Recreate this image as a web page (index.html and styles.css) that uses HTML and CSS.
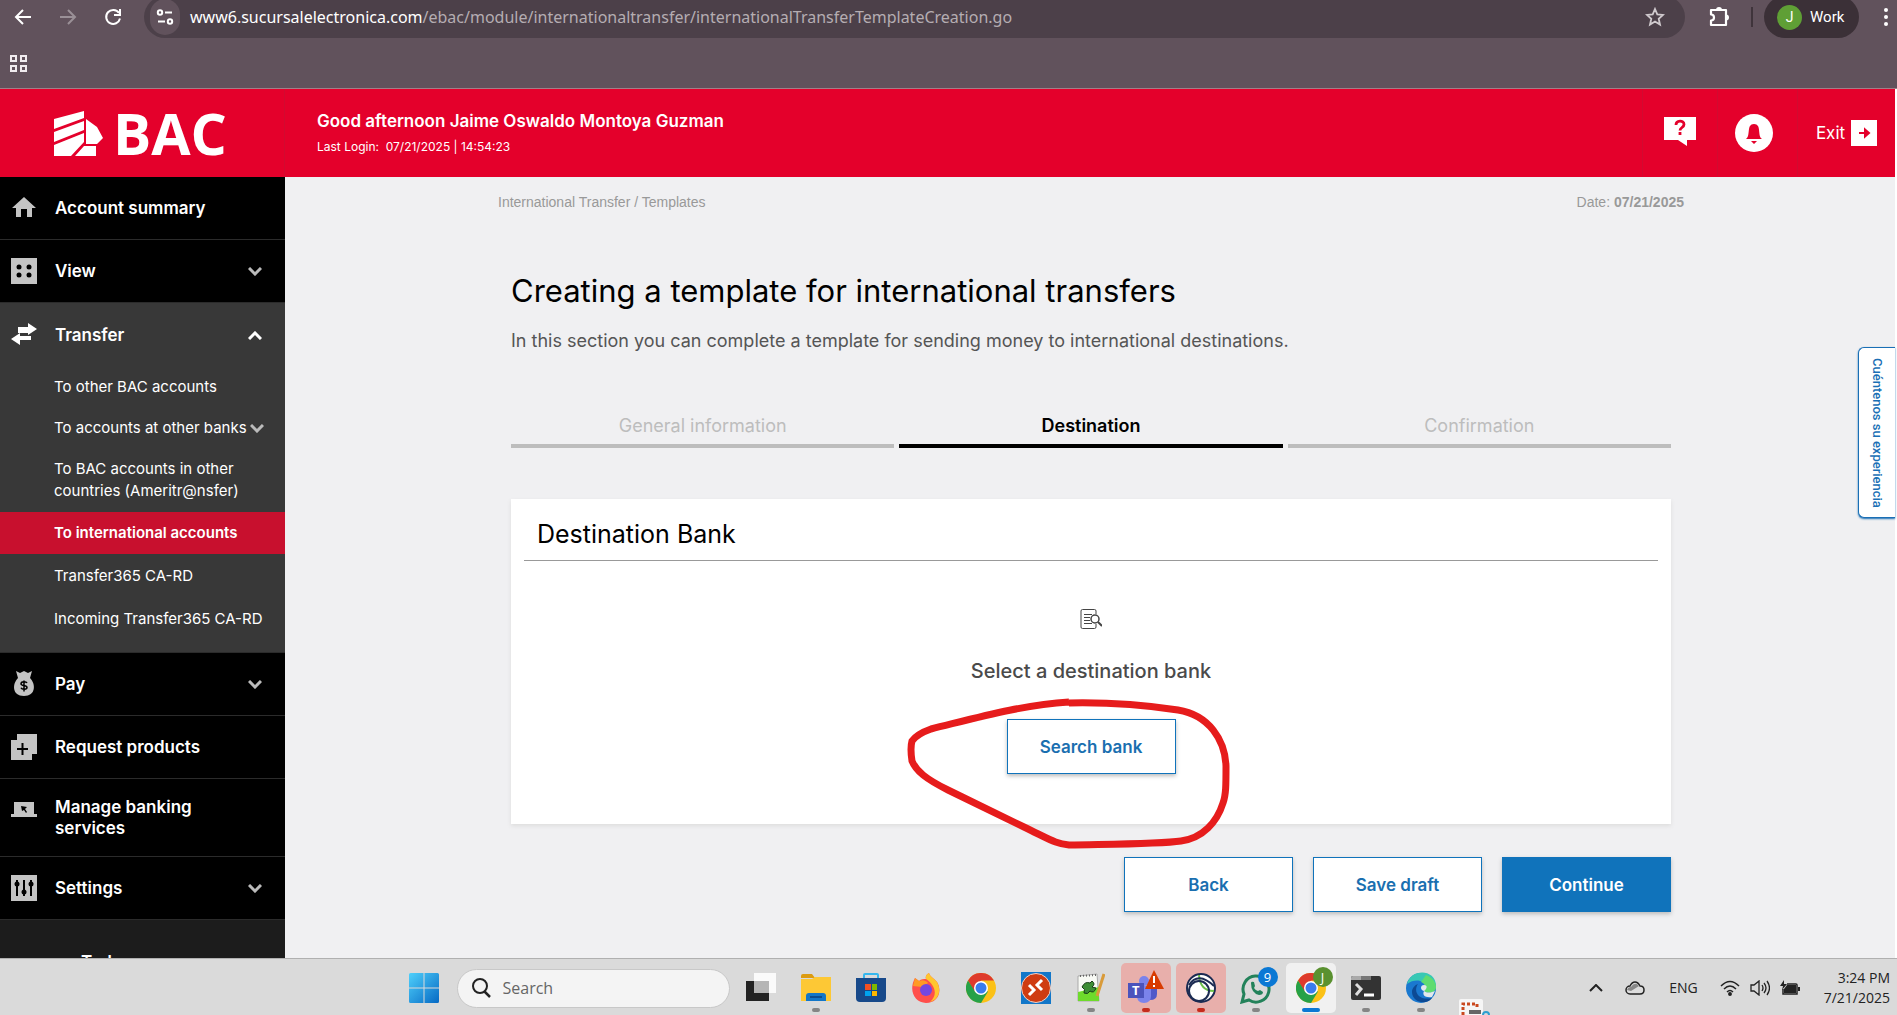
FILE: index.html
```html
<!DOCTYPE html>
<html lang="en">
<head>
    <meta charset="UTF-8">
    <meta name="viewport" content="width=device-width, initial-scale=1.0">
    <title>International Transfer - Templates</title>
    <link rel="stylesheet" href="styles.css">
</head>
<body>
    <!-- Browser bar -->
    <div class="browser">
        <div class="toolbar">
            <button class="tool" type="button" aria-label="Back">
                <svg width="18" height="18" viewBox="0 0 18 18" fill="none" stroke="#fff" stroke-width="2"><path d="M17 9H2M9 2L2 9l7 7"/></svg>
            </button>
            <button class="tool" type="button" aria-label="Forward">
                <svg width="18" height="18" viewBox="0 0 18 18" fill="none" stroke="#9a9097" stroke-width="2"><path d="M1 9h15M9 2l7 7-7 7"/></svg>
            </button>
            <button class="tool" type="button" aria-label="Reload">
                <svg width="18" height="18" viewBox="0 0 18 18" fill="none" stroke="#fff" stroke-width="2"><path d="M15 5A7 7 0 1 0 16 10.500M16 1v6h-6"/></svg>
            </button>
            <div class="address">
                <span class="site-info">
                    <svg width="18" height="18" viewBox="0 0 18 18" fill="none" stroke="#fff" stroke-width="2"><circle cx="4" cy="4.500" r="2.200"/><path d="M9 4.500h7M2 13.500h7"/><circle cx="14" cy="13.500" r="2.200"/></svg>
                </span>
                <span class="url">www6.sucursalelectronica.com<span class="url-path">/ebac/module/internationaltransfer/internationalTransferTemplateCreation.go</span></span>
                <svg class="star" width="20" height="20" viewBox="0 0 20 20" fill="none" stroke="#d0cace" stroke-width="1.800"><path d="M10 2l2.300 5.400 5.700.5-4.300 3.900 1.300 5.800-5-3.100-5 3.100 1.300-5.800L2 7.900l5.700-.5z"/></svg>
            </div>
            <button class="tool extensions" type="button" aria-label="Extensions">
                <svg width="22" height="22" viewBox="0 0 22 22"><path d="M2 4h15v15H2v-4.500c4 0 4-6 0-6z" fill="none" stroke="#fff" stroke-width="2.200" stroke-linejoin="round"/><path d="M7 4a3 3 0 0 1 6 0zM17 8.500a3 3 0 0 1 0 6z" fill="#fff"/></svg>
            </button>
            <span class="separator"></span>
            <button class="profile" type="button"><span class="avatar">J</span>Work</button>
            <button class="tool more" type="button" aria-label="Menu">
                <svg width="6" height="18" viewBox="0 0 6 18" fill="#fff"><circle cx="3" cy="2" r="2"/><circle cx="3" cy="9" r="2"/><circle cx="3" cy="16" r="2"/></svg>
            </button>
        </div>
        <div class="bookmarks">
            <svg width="20" height="20" viewBox="0 0 20 20" fill="none" stroke="#f1ecef" stroke-width="2"><path d="M2 2h5v5H2zM12 2h5v5h-5zM2 12h5v5H2zM12 12h5v5h-5z"/></svg>
        </div>
    </div>

    <div class="page">
        <!-- Header -->
        <header class="header">
            <a class="logo" href="#">
                <svg width="50" height="45" viewBox="0 0 50 45" fill="#fff"><path d="M0 8L30 0v7L0 18zM0 21L30 10v9L0 31zM0 34L30 22v9L17 45H0zM32 8l11 8 6 11-6 6H32zM21 45l9-10h12v10z"/></svg>
                <span>BAC</span>
            </a>
            <div class="greeting">
                <strong>Good afternoon Jaime Oswaldo Montoya Guzman</strong>
                <span>Last Login: &nbsp;07/21/2025 | 14:54:23</span>
            </div>
            <nav class="header-links">
                <a class="help" href="#" aria-label="Help">
                    <svg width="32" height="29" viewBox="0 0 32 29"><path d="M0 0h32v23h-9v6l-9-6H0z" fill="#fff"/><path d="M12 8c0-5 8-5 8-.5 0 3-4 3-4 6M16 15v3" fill="none" stroke="#e4002b" stroke-width="2.800"/></svg>
                </a>
                <a class="bell" href="#" aria-label="Notifications">
                    <svg width="38" height="38" viewBox="0 0 38 38"><circle cx="19" cy="19" r="19" fill="#fff"/><path d="M11 25c5-3 0-15 8-15s3 12 8 15zM16 27h6l-3 3z" fill="#e4002b"/></svg>
                </a>
                <a class="exit" href="#">Exit
                    <svg width="26" height="26" viewBox="0 0 26 26"><path d="M0 0h26v26H0z" fill="#fff"/><path d="M8 13h7M14 9.500l4 3.500-4 3.500z" fill="#e4002b" stroke="#e4002b" stroke-width="2"/></svg>
                </a>
            </nav>
        </header>

        <div class="body">
            <!-- Side menu -->
            <nav class="sidebar">
                <ul class="menu">
                    <li><a class="menu-item" href="#">
                        <svg class="icon" viewBox="0 0 26 26"><path d="M13 2l12 11h-4v9h-5v-8h-6v8H5v-9H1z" fill="#c4c4c4"/></svg>
                        Account summary</a></li>
                    <li><a class="menu-item" href="#">
                        <svg class="icon" viewBox="0 0 26 26"><path d="M0 0h26v26H0z" fill="#c4c4c4"/><circle cx="8" cy="9" r="2.500"/><circle cx="18" cy="9" r="2.500"/><circle cx="8" cy="17" r="2.500"/><circle cx="18" cy="17" r="2.500"/></svg>
                        View
                        <svg class="arrow" viewBox="0 0 14 9"><path d="M1 1l6 6 6-6"/></svg></a></li>
                    <li class="open">
                        <a class="menu-item" href="#">
                            <svg class="icon" viewBox="0 0 26 26" fill="#fff"><path d="M17 1l9 6-9 6v-2H7V5h10zM9 11v3h11v4H9v5l-9-6z"/></svg>
                            Transfer
                            <svg class="arrow" viewBox="0 0 14 9"><path d="M1 8l6-6 6 6"/></svg></a>
                        <ul class="submenu">
                            <li><a href="#">To other BAC accounts</a></li>
                            <li><a href="#">To accounts at other banks <svg class="arrow" viewBox="0 0 14 9"><path d="M1 1l6 6 6-6"/></svg></a></li>
                            <li><a href="#">To BAC accounts in other countries (Ameritr@nsfer)</a></li>
                            <li class="active"><a href="#">To international accounts</a></li>
                            <li><a href="#">Transfer365 CA-RD</a></li>
                            <li><a href="#">Incoming Transfer365 CA-RD</a></li>
                        </ul>
                    </li>
                    <li><a class="menu-item" href="#">
                        <svg class="icon" viewBox="0 0 26 26"><path d="M5 0l4 2 4-2 4 2 4-2-2 7c6 6 6 18-6 18S1 13 7 7z" fill="#c4c4c4"/><path d="M16 12c-1-2-6-1.500-6 .7 0 2.600 6 1.200 6 3.800 0 2.300-5 2.500-6 .3M13 9.500v11" fill="none" stroke="#000" stroke-width="1.500"/></svg>
                        Pay
                        <svg class="arrow" viewBox="0 0 14 9"><path d="M1 1l6 6 6-6"/></svg></a></li>
                    <li><a class="menu-item" href="#">
                        <svg class="icon" viewBox="0 0 26 26"><path d="M6 0h20v20h-5v6H0V6h6z" fill="#c4c4c4"/><path d="M6 15h11M11.500 9v12" stroke="#000" stroke-width="2"/></svg>
                        Request products</a></li>
                    <li><a class="menu-item two-lines" href="#">
                        <svg class="icon" viewBox="0 0 26 26"><path d="M3 5h20v12h3v3H0v-3h3z" fill="#c4c4c4"/><path d="M10 9l6 1-2 2 2 3-1 1-2-3-2 1z"/></svg>
                        Manage banking services</a></li>
                    <li><a class="menu-item" href="#">
                        <svg class="icon" viewBox="0 0 26 26"><path d="M0 0h26v26H0z" fill="#c4c4c4"/><path d="M6 5v16M13 5v16M20 5v16" stroke="#000" stroke-width="2"/><circle cx="6" cy="9" r="2.500"/><circle cx="13" cy="17" r="2.500"/><circle cx="20" cy="9" r="2.500"/></svg>
                        Settings
                        <svg class="arrow" viewBox="0 0 14 9"><path d="M1 1l6 6 6-6"/></svg></a></li>
                </ul>
                <div class="sidebar-foot">Today</div>
            </nav>

            <!-- Content -->
            <main class="main">
                <div class="container">
                    <div class="crumbs">
                        <span>International Transfer / Templates</span>
                        <span>Date: <b>07/21/2025</b></span>
                    </div>
                    <div class="content">
                        <h1>Creating a template for international transfers</h1>
                        <p class="intro">In this section you can complete a template for sending money to international destinations.</p>
                        <ol class="steps">
                            <li>General information</li>
                            <li class="current">Destination</li>
                            <li>Confirmation</li>
                        </ol>
                        <section class="card">
                            <h2>Destination Bank</h2>
                            <svg width="22" height="20" viewBox="0 0 22 20" fill="none" stroke="#444"><path d="M16 5V2q0-1.500-1.500-1.500h-12Q1 .5 1 2v16q0 1.500 1.500 1.500h12q1.500 0 1.500-1.500v-3M4 5.500h8M4 8.500h6M4 11.500h6M4 14.500h8"/><circle cx="15" cy="10" r="4" stroke-width="1.500"/><path d="M18 13l4 4" stroke-width="2"/></svg>
                            <p>Select a destination bank</p>
                            <button class="btn" type="button">Search bank</button>
                            <svg class="marker" width="340" height="170" viewBox="900 690 340 170"><path d="M1068 703C1113 702 1150 706 1177 710C1208 715 1224 740 1225 766C1225 785 1225 795 1222 803C1216 822 1202 838 1180 841C1160 844 1120 844 1068 845C1055 844 1050 840 1023 827L947 790C925 779 915 771 911 761Q909 748 911 741Q916 734 930 729C975 718 1020 705 1068 702"/></svg>
                        </section>
                        <div class="actions">
                            <button class="btn" type="button">Back</button>
                            <button class="btn" type="button">Save draft</button>
                            <button class="btn primary" type="submit">Continue</button>
                        </div>
                    </div>
                </div>
            </main>
        </div>
        <button class="feedback" type="button">Cuéntenos su experiencia</button>
    </div>

    <!-- Taskbar -->
    <footer class="taskbar">
        <div class="apps">
            <button class="app" type="button" aria-label="Start">
                <svg width="30" height="30" viewBox="0 0 30 30"><defs><linearGradient id="win" x2="1" y2="1"><stop stop-color="#4fd0fb"/><stop offset="1" stop-color="#0669c4"/></linearGradient></defs><path d="M0 1.500Q0 0 1.500 0H14.500V14.500H0zM15.500 0H28.500Q30 0 30 1.500V14.500H15.500zM0 15.500H14.500V30H1.500Q0 30 0 28.500zM15.500 15.500H30V28.500Q30 30 28.500 30H15.500z" fill="url(#win)"/></svg>
            </button>
            <label class="search">
                <svg width="20" height="20" viewBox="0 0 20 20" fill="none" stroke="#222" stroke-width="2"><circle cx="9" cy="8" r="7"/><path d="M13 13l6 6" stroke-width="2.500"/></svg>
                <input type="text" placeholder="Search" aria-label="Search">
            </label>
            <button class="app" type="button" aria-label="Task view">
                <svg width="30" height="30" viewBox="0 0 30 30"><path d="M0 8h23v20H0z" fill="#222"/><path d="M8 0h22v20H8z" fill="#fff" opacity=".85"/><path d="M8 8h15v12H8z" fill="#b5b5b5"/></svg>
            </button>
            <button class="app running" type="button" aria-label="File Explorer">
                <svg width="30" height="30" viewBox="0 0 30 30"><path d="M0 3q0-2 2-2h9l3 4H0z" fill="#dc9b10"/><path d="M0 6h11l3-2h16v24H0z" fill="#fdc835"/><path d="M5 28v-5q0-3 3-3h14q3 0 3 3v5z" fill="#1276c8"/><path d="M9 24h12" stroke="#0a4d91" stroke-width="2"/></svg>
            </button>
            <button class="app" type="button" aria-label="Store">
                <svg width="30" height="30" viewBox="0 0 30 30"><path d="M8 6V2q0-1 1-1h12q1 0 1 1v4" fill="none" stroke="#35b7ee" stroke-width="2"/><path d="M0 5h30v20q0 4-4 4H4q-4 0-4-4z" fill="#17498a"/><path d="M9 11h6v6H9z" fill="#f25022"/><path d="M16 11h5v6h-5z" fill="#7fba00"/><path d="M9 18h6v5H9z" fill="#00a4ef"/><path d="M16 18h5v5h-5z" fill="#ffb900"/></svg>
            </button>
            <button class="app" type="button" aria-label="Firefox">
                <svg width="30" height="30" viewBox="0 0 30 30"><path d="M4 5l4 3c2-2 5-2 7-2-1-3 1-5 3-6 1 4 5 5 8 9 6 10 0 21-11 21C4 30-3 18 4 5z" fill="#ff4f4b"/><path d="M18 0c1 4 5 5 8 9 5 9 1 18-7 20 9-8 4-18-4-23-1-3 1-5 3-6z" fill="#ffc62e"/><path d="M4 5l4 3c4-2 8 0 9 2l-6 4-9-1z" fill="#ff9a24"/><circle cx="15" cy="17" r="6" fill="#7447e0"/></svg>
            </button>
            <button class="app" type="button" aria-label="Chrome">
                <svg width="30" height="30" viewBox="0 0 30 30"><g id="chrome"><circle cx="15" cy="15" r="15" fill="#fbc116"/><path d="M2 7.500A15 15 0 0 1 28 7.500H15L8.500 19z" fill="#de3a2c"/><path d="M2 7.500A15 15 0 0 0 15 30l7-11.500-6-2-7 2z" fill="#26a148"/><circle cx="15" cy="15" r="7" fill="#fff"/><circle cx="15" cy="15" r="5.500" fill="#3a7cec"/></g></svg>
            </button>
            <button class="app" type="button" aria-label="Remote Desktop">
                <svg width="30" height="32" viewBox="0 0 30 32"><path d="M0 0h30v32H0z" fill="#1277c9"/><circle cx="15" cy="16" r="14.500" fill="#cf3c12" stroke="#f1d4ca"/><path d="M8 13l5 5-5 5M21 8l-5 5 5 5" fill="none" stroke="#fff" stroke-width="3"/></svg>
            </button>
            <button class="app running" type="button" aria-label="Notepad++">
                <svg width="28" height="30" viewBox="0 0 28 30"><path d="M1 3l19-2 2 27H1z" fill="#f8faf5" stroke="#aaa"/><path d="M1 19l21-5v14H1z" fill="#6edb2c"/><path d="M3 3l17-1" stroke="#666" stroke-width="2" stroke-dasharray="1 2"/><path d="M5 14q3-6 8-4l2-2q4 3 0 6l4 1q-2 6-6 3-2 4-6 2 2-4-2-6z" fill="#3d8d35" stroke="#173d17"/><path d="M27 1l-7 22" stroke="#d99b3a" stroke-width="3"/></svg>
            </button>
            <button class="app running alert" type="button" aria-label="Teams">
                <svg width="36" height="36" viewBox="0 0 36 36"><circle cx="16" cy="11" r="5" fill="#7b83eb"/><circle cx="25" cy="12" r="4" fill="#5059c9"/><path d="M19 16h10v8q0 6-7 6z" fill="#5059c9"/><path d="M9 16h14v10q0 7-7 7t-7-7z" fill="#7b83eb"/><path d="M0 13h16v15H0z" fill="#4b53bc"/><text class="teams-t" x="4" y="25">T</text><path d="M26 0l10 19H17z" fill="#d83b01"/><path d="M26 6v7M26 15v2" stroke="#fff" stroke-width="2"/></svg>
            </button>
            <button class="app running alert" type="button" aria-label="Monitor">
                <svg width="30" height="30" viewBox="0 0 30 30" fill="none" stroke="#1b2b52" stroke-width="2"><circle cx="15" cy="15" r="14" fill="#fff"/><path d="M13 2q1 16 15 16" stroke="#6cc04a"/><circle cx="13" cy="18" r="10"/><path d="M3 12Q12-2 28 13"/></svg>
            </button>
            <button class="app running" type="button" aria-label="WhatsApp">
                <svg width="32" height="32" viewBox="0 0 32 32" fill="none" stroke="#23825a" stroke-width="3"><path d="M2 30l2-8a13 13 0 1 1 5 6z"/><path d="M11 11q0-2 3-1l1 4-1 2q2 3 4 3l2-1 3 2q0 3-4 3-8-2-8-12z" fill="#23825a" stroke="none"/></svg>
                <span class="badge">9</span>
            </button>
            <button class="app running selected" type="button" aria-label="Chrome Work">
                <svg width="30" height="30" viewBox="0 0 30 30"><use href="#chrome"/></svg>
                <span class="badge green">J</span>
            </button>
            <button class="app running" type="button" aria-label="Terminal">
                <svg width="30" height="24" viewBox="0 0 30 24"><rect width="30" height="24" rx="2" fill="#333"/><path d="M0 4V2q0-2 2-2h8v4z" fill="#aaa"/><path d="M10 0h10v4H10z" fill="#777"/><path d="M5 8l5 5-5 6" fill="none" stroke="#ddd" stroke-width="3"/><path d="M13 19h10" stroke="#fff" stroke-width="3"/></svg>
            </button>
            <button class="app running" type="button" aria-label="Edge">
                <svg width="30" height="32" viewBox="0 0 30 32"><circle cx="15" cy="16" r="15" fill="#1a78cf"/><path d="M1 12C5-4 30-3 30 14c0 7-8 8-12 5 5-10-8-14-17-7z" fill="#38c8b4"/><path d="M20 3c8 3 10 9 10 12 0 6-8 7-12 4 3-5 0-8-3-9z" fill="#5fdc70"/><path d="M12 12c-5 7 0 17 14 14-6 8-20 4-20-6 0-4 3-7 6-8z" fill="#0c4a94"/><path d="M18 19c-4-1-4-6 0-6s3 4 0 6c4 3 8 1 11 0l-3 6c-7 1-10-2-8-6z" fill="#e2e8ec"/></svg>
            </button>
            <button class="app snip" type="button" aria-label="Snipping Tool">
                <svg width="34" height="16" viewBox="0 0 34 16"><rect width="24" height="20" rx="2" fill="#f6f6f6"/><path d="M4 16V5h14v4" fill="none" stroke="#c9481e" stroke-width="3" stroke-dasharray="3 2"/><path d="M10 11h12v4H10z" fill="#666"/><circle cx="27" cy="16" r="3" fill="none" stroke="#2d9fd0" stroke-width="2"/></svg>
            </button>
        </div>
        <div class="tray">
            <svg width="14" height="8" viewBox="0 0 14 8" fill="none" stroke="#222" stroke-width="2"><path d="M1 7l6-6 6 6"/></svg>
            <svg class="cloud" width="20" height="14" viewBox="0 0 20 14"><path d="M5 13a4 4 0 0 1 0-8q2-4 5-4t5 4q4 0 4 4t-4 4z" fill="#ddd" stroke="#222" stroke-width="1.500"/><path d="M2 9q1-3 4-3 4-6 8-1l-8 5z" fill="#888"/></svg>
            <span class="lang">ENG</span>
            <div class="status">
                <svg width="20" height="16" viewBox="0 0 20 16" fill="none" stroke="#222" stroke-width="1.500"><path d="M1 6q9-9 18 0M4 9q6-6 12 0M7 12q3-3 6 0"/><circle cx="10" cy="14" r="1.200" fill="#222"/></svg>
                <svg width="20" height="16" viewBox="0 0 20 16" fill="none" stroke="#222" stroke-width="1.300"><path d="M1 5h3l5-4v14l-5-4H1zM12 5q2 3 0 6M14 3q4 5 0 10M17 1q5 7 0 14"/></svg>
                <svg width="20" height="16" viewBox="0 0 20 16"><path d="M7 4h9q1 0 1 1v9H3V9" fill="none" stroke="#222" stroke-width="1.500"/><path d="M7 5h9v8H4V9zM18 7h2v4h-2zM4 0L0 6h3L2 10l5-6H4z" fill="#222"/></svg>
            </div>
            <div class="clock"><span>3:24 PM</span><span>7/21/2025</span></div>
        </div>
    </footer>
</body>
</html>
```
FILE: styles.css
```css
* {
    box-sizing: border-box;
}

body {
    margin: 0;
    height: 100vh;
    overflow: hidden;
    display: flex;
    flex-direction: column;
    font-family: Inter, "Liberation Sans", sans-serif;
    background-color: #fff;
}

button {
    font-family: inherit;
    border: none;
    padding: 0;
    background: none;
    cursor: pointer;
}

a {
    color: inherit;
    text-decoration: none;
}

ul, ol {
    list-style: none;
    margin: 0;
    padding: 0;
}

svg {
    display: block;
    flex-shrink: 0;
}

/* Browser bar */
.browser {
    flex: none;
    background-color: #61525c;
    border-bottom: 1px solid #a08088;
    font-family: "Noto Sans", sans-serif;
}

.toolbar {
    display: flex;
    align-items: center;
    height: 34px;
}

.tool {
    width: 45px;
    display: flex;
    justify-content: center;
}

.address {
    flex: 1;
    display: flex;
    align-items: center;
    height: 42px;
    margin-left: 9px;
    padding: 0 20px 0 6px;
    border-radius: 21px;
    background-color: #4c4049;
}

.site-info {
    width: 30px;
    height: 36px;
    border-radius: 15px;
    background-color: #61525c;
    display: flex;
    align-items: center;
    justify-content: center;
}

.url {
    flex: 1;
    margin-left: 10px;
    font-size: 16px;
    color: #fff;
    white-space: nowrap;
}

.url-path {
    color: #b5adb2;
}

.extensions {
    width: 66px;
    padding-left: 4px;
}

.separator {
    width: 2px;
    height: 20px;
    background-color: #3f343b;
}

.profile {
    display: flex;
    align-items: center;
    gap: 8px;
    width: 95px;
    height: 42px;
    margin-left: 11px;
    padding-left: 13px;
    border-radius: 21px;
    background-color: #3b3037;
    color: #fff;
    font-family: Roboto, sans-serif;
    font-size: 15px;
}

.avatar {
    width: 25px;
    height: 25px;
    border-radius: 50%;
    background-color: #5f9f35;
    font-size: 14px;
    line-height: 25px;
}

.more {
    width: 38px;
    padding-left: 16px;
}

.bookmarks {
    height: 54px;
    padding: 20px 9px;
}

/* Header */
.page {
    position: relative;
    flex: 1;
    min-height: 0;
    margin-right: 2px;
    display: flex;
    flex-direction: column;
}

.header {
    flex: none;
    display: flex;
    height: 88px;
    background-color: #e4002b;
    color: #fff;
}

.logo {
    width: 285px;
    display: flex;
    align-items: center;
    gap: 9px;
    padding-left: 54px;
    border-right: 1px solid #d20a30;
    font: bold 57px/57px "Open Sans", sans-serif;
}

.greeting {
    flex: 1;
    display: flex;
    flex-direction: column;
    justify-content: center;
    gap: 6px;
    padding-left: 32px;
    font-size: 12px;
    line-height: 18px;
}

.greeting strong {
    font-size: 17px;
    font-weight: 600;
    line-height: 22px;
}

.header-links {
    display: flex;
}

.header-links a {
    display: flex;
    align-items: center;
    justify-content: center;
    border-left: 1px solid #d20a30;
}

.header-links .help {
    width: 75px;
    padding-bottom: 3px;
}

.header-links .bell {
    width: 80px;
    padding-right: 7px;
}

.header-links .exit {
    width: 98px;
    gap: 6px;
    font-size: 17px;
}

.body {
    flex: 1;
    min-height: 0;
    display: flex;
}

/* Side menu */
.sidebar {
    width: 285px;
    flex: none;
    overflow: hidden;
    background-color: #1c1c1c;
    color: #fff;
}

.menu > li {
    background-color: #000;
    border-bottom: 1px solid #2b2b2b;
}

.menu > li.open {
    background-color: #383838;
}

.menu-item {
    display: flex;
    align-items: center;
    gap: 18px;
    min-height: 62px;
    padding: 0 23px 0 11px;
    font-size: 17px;
    font-weight: 600;
    line-height: 21px;
}

.menu-item.two-lines {
    align-items: flex-start;
    padding: 18px 60px 17px 11px;
}

.open .menu-item {
    min-height: 64px;
}

.icon {
    width: 26px;
    height: 26px;
}

.arrow {
    width: 14px;
    height: 9px;
    margin-left: auto;
    fill: none;
    stroke: #bbb;
    stroke-width: 3;
}

.open > .menu-item .arrow {
    stroke: #fff;
}

.submenu {
    padding-bottom: 12px;
    font-size: 15px;
    line-height: 22px;
}

.submenu a {
    display: flex;
    align-items: center;
    padding: 9px 21px 10px 54px;
}

.submenu .active {
    background-color: #c8102e;
    font-weight: 600;
}

.submenu .active a {
    padding-top: 10px;
}

.active ~ li a {
    padding-top: 11px;
}

.sidebar-foot {
    padding: 32px 81px;
    font-size: 17px;
    font-weight: 600;
    line-height: 21px;
}

/* Content */
.main {
    flex: 1;
    overflow: hidden;
    padding-left: 2px;
    background-color: #f0f0f2;
}

.container {
    max-width: 1186px;
    margin: 0 auto;
    padding-top: 15px;
}

.crumbs {
    display: flex;
    justify-content: space-between;
    font: 14px/20px "Liberation Sans", Arial, sans-serif;
    color: #999;
}

.content {
    padding: 0 13px;
}

h1 {
    margin: 59px 0 18px;
    font-size: 31px;
    font-weight: 400;
    line-height: 40px;
}

.intro {
    margin: 0 0 61px;
    font-size: 18px;
    line-height: 24px;
    color: #555;
}

.steps {
    display: flex;
    gap: 5px;
    font-size: 18px;
    line-height: 24px;
    text-align: center;
    color: #bdbdbd;
}

.steps li {
    flex: 1;
    padding-bottom: 6px;
    border-bottom: 4px solid #bdbdbd;
}

.steps .current {
    color: #000;
    border-color: #000;
    font-weight: 600;
}

.card {
    position: relative;
    display: flex;
    flex-direction: column;
    align-items: center;
    margin: 51px 0 33px;
    padding: 20px 13px 50px;
    background-color: #fff;
    box-shadow: 0 2px 4px #ddd;
}

.card h2 {
    align-self: stretch;
    margin: 0 0 48px;
    padding: 0 13px 11px;
    border-bottom: 1px solid #999;
    font-size: 25px;
    font-weight: 400;
    line-height: 30px;
}

.card p {
    margin: 28px 0 34px;
    font-size: 20px;
    font-weight: 500;
    line-height: 28px;
    color: #4a4a4a;
}

.btn {
    width: 169px;
    height: 55px;
    border: 1px solid #1073bb;
    background-color: #fff;
    color: #1a6fb0;
    font-size: 17px;
    font-weight: 600;
    box-shadow: 0 2px 4px #bbb;
}

.btn.primary {
    background-color: #1073bb;
    color: #fff;
}

.actions {
    display: flex;
    justify-content: flex-end;
    gap: 20px;
}

/* Hand drawn circle over the card */
.marker {
    position: absolute;
    top: 191px;
    left: calc(50% - 190px);
    fill: none;
    stroke: #e61c1c;
    stroke-width: 7;
    pointer-events: none;
}

.feedback {
    position: absolute;
    top: 258px;
    right: 0;
    width: 37px;
    height: 171px;
    border: 1px solid #1a6fb5;
    border-right: none;
    border-radius: 6px 0 0 6px;
    background-color: #fff;
    box-shadow: 0 1px 2px #1a6fb5;
    color: #1a6fb5;
    font-family: Roboto, sans-serif;
    font-size: 13px;
    font-weight: 500;
    writing-mode: vertical-rl;
}

/* Taskbar */
.taskbar {
    flex: none;
    display: grid;
    grid-template-columns: 1fr auto 1fr;
    height: 57px;
    background-color: #dadada;
    border-top: 1px solid #b0b0b0;
    font-family: "Open Sans", sans-serif;
    color: #222;
}

.apps {
    grid-column: 2;
    display: flex;
    align-items: center;
    gap: 5px;
    padding: 2px 0 0 2px;
}

.app {
    position: relative;
    width: 50px;
    height: 50px;
    border-radius: 5px;
    display: flex;
    align-items: center;
    justify-content: center;
}

.running::after {
    content: "";
    position: absolute;
    bottom: 1px;
    left: 21px;
    width: 8px;
    height: 4px;
    border-radius: 2px;
    background-color: #858585;
}

.alert {
    background-color: #e8afab;
}

.alert::after {
    background-color: #c42b1c;
}

.selected {
    background-color: #f1f1f1;
}

.selected::after {
    left: 16px;
    width: 18px;
    background-color: #0a78d4;
}

.teams-t {
    font: bold 13px "Open Sans", sans-serif;
    fill: #fff;
}

.badge {
    position: absolute;
    top: 4px;
    right: 3px;
    width: 20px;
    height: 20px;
    border-radius: 50%;
    background-color: #0a78d4;
    color: #fff;
    font-size: 13px;
    line-height: 20px;
}

.badge.green {
    background-color: #5a9130;
}

.search {
    display: flex;
    align-items: center;
    gap: 10px;
    width: 273px;
    height: 39px;
    margin: 0 1px 0 3px;
    padding: 0 13px;
    border: 1px solid #c8c8c8;
    border-radius: 20px;
    background-color: #f4f4f4;
}

.search input {
    width: 100%;
    border: none;
    outline: none;
    background: none;
    font: 16px "Open Sans", sans-serif;
}

.search input::placeholder {
    color: #666;
}

.snip {
    align-self: flex-end;
    height: 16px;
}

.tray {
    display: flex;
    align-items: center;
    justify-content: flex-end;
    padding: 2px 7px 0 0;
    font-size: 14px;
    line-height: 20px;
}

.cloud {
    margin: 0 24px 0 22px;
}

.status {
    display: flex;
    gap: 10px;
    margin: 0 24px 0 22px;
}

.clock {
    display: flex;
    flex-direction: column;
    align-items: flex-end;
}
```
